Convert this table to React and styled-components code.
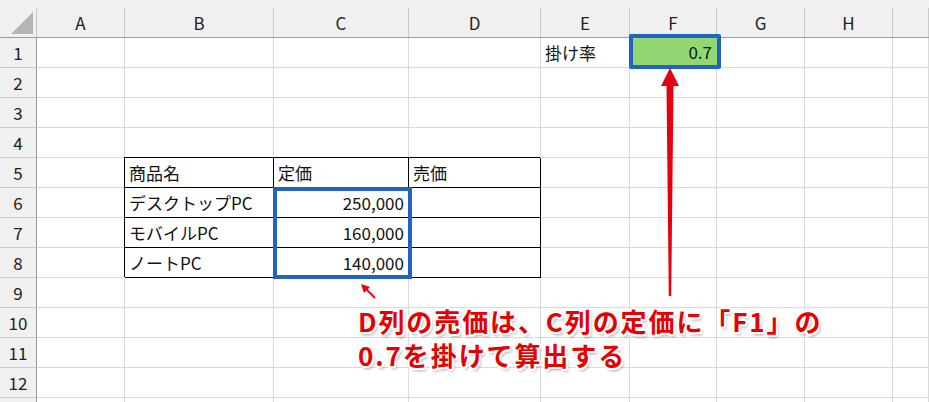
import styled, { createGlobalStyle } from "styled-components";

const GlobalStyle = createGlobalStyle`
  html, body {
    margin: 0;
    padding: 0;
    background: #fff;
    overflow: hidden;
  }
  body {
    font-family: "Noto Sans CJK JP", "Noto Sans", sans-serif;
  }
`;

const COLS = "37px 88px 149px 135px 132px 89px 87px 88px 88px 1fr";
const LETTERS = ["A", "B", "C", "D", "E", "F", "G", "H", "I"];

// 行ごとのセル内容 (列インデックス: A=0)
const DATA = {
  1: { 4: { text: "掛け率" } },
  5: {
    1: { text: "商品名", boxed: true },
    2: { text: "定価", boxed: true },
    3: { text: "売価", boxed: true },
  },
  6: {
    1: { text: "デスクトップPC", boxed: true },
    2: { text: "250,000", boxed: true, right: true, select: true },
    3: { text: "", boxed: true },
  },
  7: {
    1: { text: "モバイルPC", boxed: true },
    2: { text: "160,000", boxed: true, right: true },
    3: { text: "", boxed: true },
  },
  8: {
    1: { text: "ノートPC", boxed: true },
    2: { text: "140,000", boxed: true, right: true },
    3: { text: "", boxed: true },
  },
};

const App = () => {
  const rows = Array.from({ length: 13 }, (_, i) => i + 1);

  return (
    <>
      <GlobalStyle />
      <Sheet>
        <HeaderRow>
          <Corner>
            <CornerMark viewBox="0 0 22 22">
              <polygon points="0,22 22,0 22,22" fill="#b5b5b5" />
            </CornerMark>
          </Corner>
          {LETTERS.map((l) => (
            // I列は画面外にはみ出しているので見出しは見えない
            <ColHeader key={l}>{l === "I" ? "" : l}</ColHeader>
          ))}
        </HeaderRow>

        {rows.map((r) => (
          <Row key={r}>
            <RowHeader>{r < 13 ? r : ""}</RowHeader>
            {LETTERS.map((l, c) => {
              const cell = (DATA[r] && DATA[r][c]) || {};
              if (r === 1 && c === 5) {
                return (
                  <Cell key={l} $anchor>
                    <RateBox>0.7</RateBox>
                  </Cell>
                );
              }
              return (
                <Cell
                  key={l}
                  $boxed={cell.boxed}
                  $right={cell.right}
                  $anchor={cell.select}
                >
                  {cell.text}
                  {cell.select && <Selection />}
                </Cell>
              );
            })}
          </Row>
        ))}

        <Arrows viewBox="0 0 929 402" width="929" height="402">
          {/* F1 へ向かう矢印 */}
          <polygon
            points="670,68 679,86 673.5,86 671.2,296 668.8,296 666.5,86 661,86"
            fill="#e60012"
          />
          {/* C列の下の小さな矢印 */}
          <polygon points="361,284 370,287 364,293" fill="#e60012" />
          <line
            x1="366"
            y1="289"
            x2="375"
            y2="298"
            stroke="#e60012"
            strokeWidth="1.8"
          />
        </Arrows>

        <Note>
          D列の売価は、C列の定価に「F1」の
          <br />
          0.7を掛けて算出する
        </Note>
      </Sheet>
    </>
  );
};

const Sheet = styled.div`
  position: relative;
  width: 929px;
  height: 402px;
  overflow: hidden;
  background: #fff;
  color: #111;
`;

const HeaderRow = styled.div`
  display: grid;
  grid-template-columns: ${COLS};
  height: 38px;
  box-sizing: border-box;
  padding-top: 8px;
  background: #f0f0f0;
  border-bottom: 1px solid #9c9c9c;
`;

const Corner = styled.div`
  position: relative;
  border-right: 1px solid #c9c9c9;
`;

const CornerMark = styled.svg`
  position: absolute;
  left: 11px;
  top: 4px;
  width: 22px;
  height: 22px;
`;

const ColHeader = styled.div`
  display: flex;
  align-items: center;
  justify-content: center;
  border-right: 1px solid #c9c9c9;
  font-family: "Noto Sans CJK JP", "Noto Sans", sans-serif;
  font-size: 17px;
  color: #222;
  padding-bottom: 1px;
`;

const Row = styled.div`
  display: grid;
  grid-template-columns: ${COLS};
  height: 30px;
`;

const RowHeader = styled.div`
  display: flex;
  align-items: center;
  justify-content: center;
  background: #f0f0f0;
  border-right: 1px solid #9c9c9c;
  border-bottom: 1px solid #c9c9c9;
  font-size: 17px;
  color: #222;
`;

const Cell = styled.div`
  position: ${(p) => (p.$anchor ? "relative" : "static")};
  display: flex;
  align-items: center;
  justify-content: ${(p) => (p.$right ? "flex-end" : "flex-start")};
  padding: 0 4px;
  box-sizing: border-box;
  border-right: 1px solid ${(p) => (p.$boxed ? "#000" : "#dadada")};
  border-bottom: 1px solid ${(p) => (p.$boxed ? "#000" : "#dadada")};
  box-shadow: ${(p) => (p.$boxed ? "-1px -1px 0 #000" : "none")};
  font-size: 17px;
  white-space: nowrap;
  color: #111;
`;

const Selection = styled.div`
  position: absolute;
  left: -1px;
  top: -1px;
  width: 139px;
  height: 92px;
  box-sizing: border-box;
  border: 4px solid #2363c0;
  z-index: 2;
`;

const RateBox = styled.div`
  position: absolute;
  left: -1px;
  top: -4px;
  width: 92px;
  height: 35px;
  box-sizing: border-box;
  border: 4px solid #2363c0;
  border-radius: 2px;
  background: #92d872;
  display: flex;
  align-items: center;
  justify-content: flex-end;
  padding-right: 5px;
  font-size: 17px;
  color: #111;
  z-index: 2;
`;

const Arrows = styled.svg`
  position: absolute;
  left: 0;
  top: 0;
  pointer-events: none;
  z-index: 3;
`;

const Note = styled.div`
  position: absolute;
  left: 358px;
  top: 304px;
  z-index: 4;
  font-family: "Noto Sans CJK JP", "Noto Sans", sans-serif;
  font-weight: 700;
  font-size: 26px;
  line-height: 34px;
  letter-spacing: 1.9px;
  color: #e60000;
  white-space: nowrap;
  text-shadow: 2px 0 0 #fff, -2px 0 0 #fff, 0 2px 0 #fff, 0 -2px 0 #fff,
    1.5px 1.5px 0 #fff, -1.5px 1.5px 0 #fff, 1.5px -1.5px 0 #fff,
    -1.5px -1.5px 0 #fff, 2px 3px 3px rgba(0, 0, 0, 0.35);
`;

export default App;
